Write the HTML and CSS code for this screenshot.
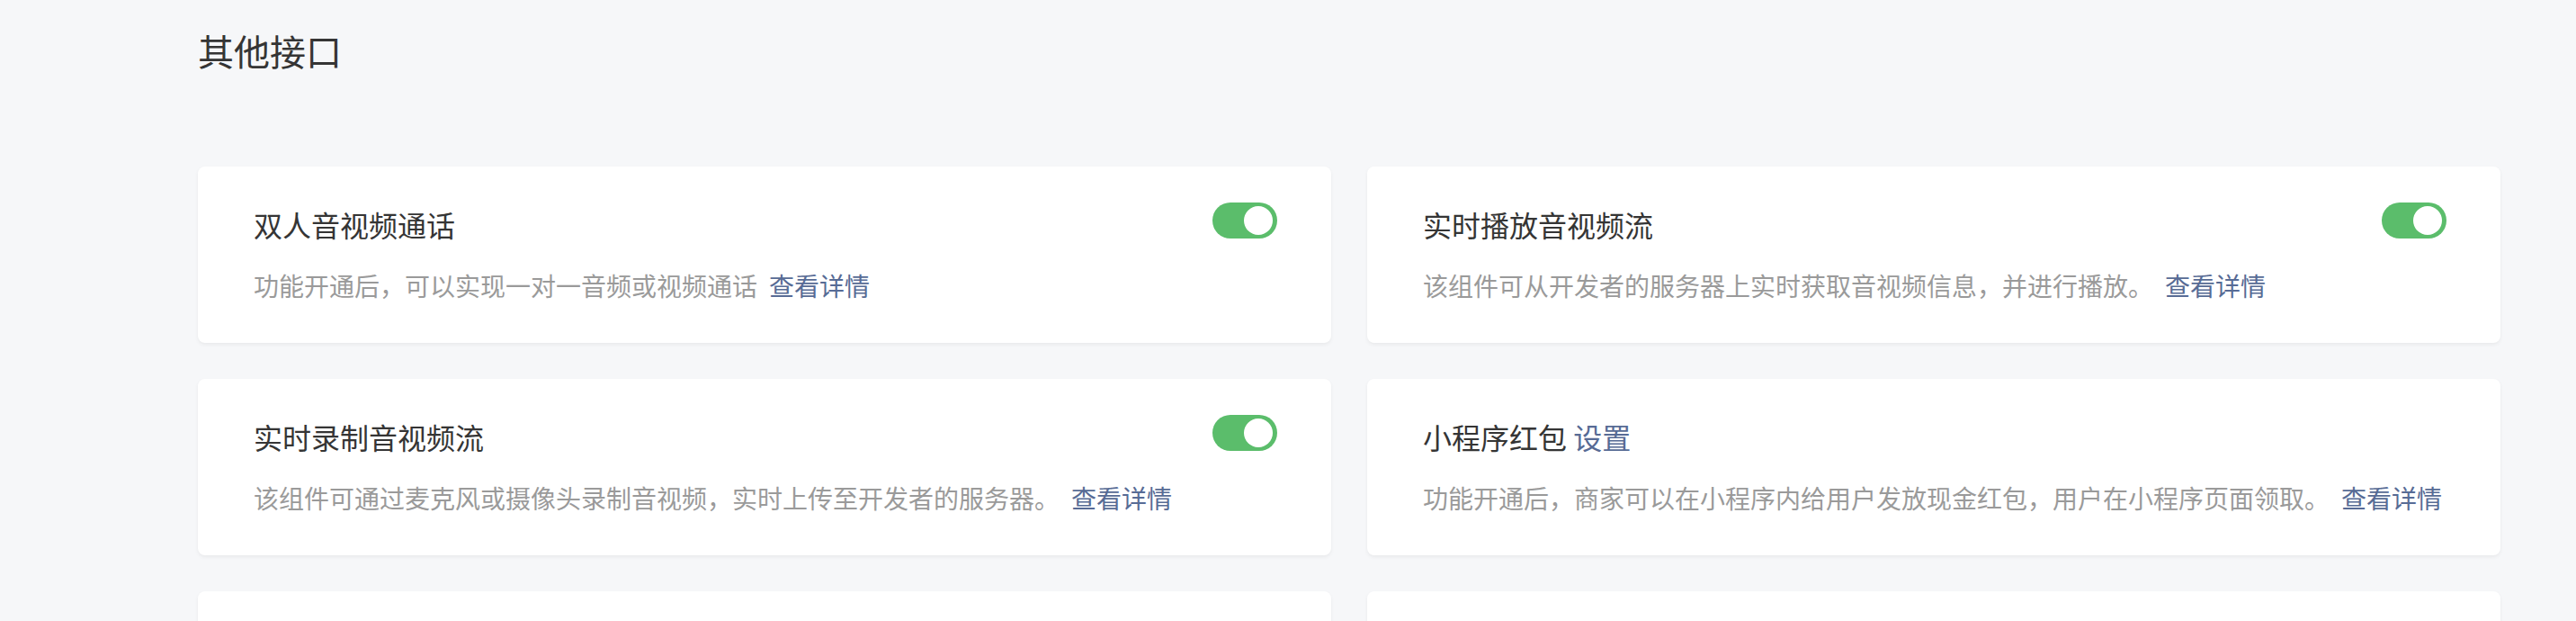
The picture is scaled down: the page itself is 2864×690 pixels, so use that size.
FILE: index.html
```html
<!DOCTYPE html>
<html lang="zh-CN">
<head>
<meta charset="utf-8">
<title>其他接口</title>
<link rel="stylesheet" href="styles.css">
</head>
<body>
<main class="page">
  <h2 class="section-title">其他接口</h2>
  <div class="grid">
    <div class="card">
      <div class="card-head">
        <span class="card-title">双人音视频通话</span>
        <span class="switch on"><span class="knob"></span></span>
      </div>
      <p class="card-desc">功能开通后，可以实现一对一音频或视频通话<a class="link more">查看详情</a></p>
    </div>
    <div class="card">
      <div class="card-head">
        <span class="card-title">实时播放音视频流</span>
        <span class="switch on"><span class="knob"></span></span>
      </div>
      <p class="card-desc">该组件可从开发者的服务器上实时获取音视频信息，并进行播放。<a class="link more">查看详情</a></p>
    </div>
    <div class="card">
      <div class="card-head">
        <span class="card-title">实时录制音视频流</span>
        <span class="switch on"><span class="knob"></span></span>
      </div>
      <p class="card-desc">该组件可通过麦克风或摄像头录制音视频，实时上传至开发者的服务器。<a class="link more">查看详情</a></p>
    </div>
    <div class="card">
      <div class="card-head">
        <span class="card-title">小程序红包 <a class="link">设置</a></span>
      </div>
      <p class="card-desc">功能开通后，商家可以在小程序内给用户发放现金红包，用户在小程序页面领取。<a class="link more">查看详情</a></p>
    </div>
    <div class="card"></div>
    <div class="card"></div>
  </div>
</main>
</body>
</html>
```

FILE: styles.css
```css
html, body {
  margin: 0;
  padding: 0;
  background: #f6f7f9;
  height: 100%;
  overflow: hidden;
}
body {
  font-family: "Noto Sans CJK SC", "Noto Sans", sans-serif;
}
.page {
  padding: 28px 84px 0 220px;
}
.section-title {
  margin: 0;
  font-size: 40px;
  line-height: 56px;
  font-weight: 400;
  color: #353535;
}
.grid {
  margin-top: 101px;
  display: grid;
  grid-template-columns: 1260px 1260px;
  column-gap: 40px;
  row-gap: 40px;
}
.card {
  background: #fff;
  border-radius: 8px;
  box-shadow: 0 2px 4px rgba(0, 0, 0, 0.06);
  height: 196px;
  box-sizing: border-box;
  padding: 46px 60px 0 62px;
}
.card-head {
  display: flex;
  justify-content: space-between;
  align-items: flex-start;
  height: 36px;
}
.card-title {
  font-size: 32px;
  line-height: 36px;
  color: #353535;
}
.switch {
  position: relative;
  display: block;
  width: 72px;
  height: 40px;
  border-radius: 20px;
  background: #5bbd6b;
  margin-top: -6px;
}
.switch .knob {
  position: absolute;
  top: 4px;
  right: 5px;
  width: 32px;
  height: 32px;
  border-radius: 50%;
  background: #fff;
}
.card-desc {
  margin: 32px 0 0;
  font-size: 28px;
  line-height: 36px;
  color: #9a9a9a;
  white-space: nowrap;
}
.link {
  color: #576b95;
  text-decoration: none;
}
.more {
  margin-left: 13px;
}
```
